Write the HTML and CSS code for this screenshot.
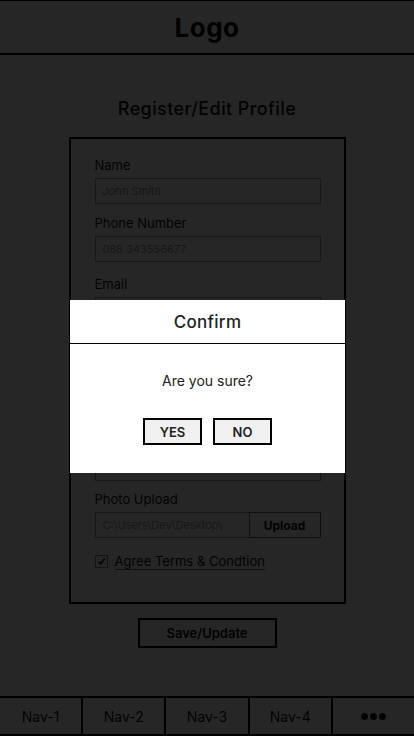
FILE: index.html
```
<!DOCTYPE html>
<html>
<head>
    <title>Register/Edit Profile</title>
    <link rel="stylesheet" href="styles.css">
</head>
<body>
    <div class="page">
        <header class="top-bar">
            <div class="logo">Logo</div>
        </header>

        <h1 class="page-title">Register/Edit Profile</h1>

        <form class="profile-card">
            <div class="field">
                <label>Name</label>
                <input type="text" placeholder="John Smith">
            </div>
            <div class="field">
                <label>Phone Number</label>
                <input type="text" placeholder="088 343556677">
            </div>
            <div class="field field-email">
                <label>Email</label>
                <input type="text" placeholder="john.smith@mail.com">
            </div>
            <div class="field">
                <label>Address</label>
                <textarea class="address-box" placeholder="Street, City"></textarea>
            </div>
            <div class="field field-photo">
                <label>Photo Upload</label>
                <div class="upload-row">
                    <input type="text" placeholder="C:\Users\Dev\Desktop\">
                    <button type="button" class="upload-btn">Upload</button>
                </div>
            </div>
            <div class="agree-row">
                <span class="check-box">
                    <svg width="9" height="9" viewBox="0 0 9 9"><path d="M1.5 4.8 L3.6 7 L7.6 1.5" fill="none" stroke="#000" stroke-width="1.4"/></svg>
                </span>
                <span class="agree-text">Agree Terms &amp; Condtion</span>
            </div>
        </form>

        <div class="save-wrap">
            <button type="button" class="save-btn">Save/Update</button>
        </div>

        <nav class="bottom-nav">
            <div class="nav-item">Nav-1</div>
            <div class="nav-item">Nav-2</div>
            <div class="nav-item">Nav-3</div>
            <div class="nav-item">Nav-4</div>
            <div class="nav-item nav-more"><span></span><span></span><span></span></div>
        </nav>
    </div>

    <div class="overlay"></div>

    <div class="modal">
        <div class="modal-head">Confirm</div>
        <div class="modal-body">
            <p class="modal-text">Are you sure?</p>
            <div class="modal-actions">
                <button type="button" class="modal-btn">YES</button>
                <button type="button" class="modal-btn">NO</button>
            </div>
        </div>
    </div>
</body>
</html>
```

FILE: styles.css
```
* {
    box-sizing: border-box;
}

body {
    margin: 0;
    background: #fff;
    font-family: Inter, "Noto Sans", sans-serif;
    color: #222;
}

.page {
    height: 736px;
    display: flex;
    flex-direction: column;
}

.page > * {
    flex-shrink: 0;
}

.top-bar {
    height: 55px;
    border-top: 1px solid #000;
    border-bottom: 2px solid #000;
    display: flex;
    align-items: center;
    justify-content: center;
}

.logo {
    font-size: 26px;
    font-weight: 700;
    color: #000;
    letter-spacing: 0.5px;
}

.page-title {
    margin: 42px 0 16px;
    text-align: center;
    font-size: 18px;
    line-height: 24px;
    font-weight: 500;
    color: #111;
    letter-spacing: 0.4px;
}

.profile-card {
    width: 277px;
    margin: 0 auto;
    border: 2px solid #000;
    padding: 18px 23px 32px 24px;
}

/* spacing only on top, so nothing collapses */
.field + .field {
    margin-top: 11px;
}

.field + .field-email {
    margin-top: 14px;
}

.field + .field-photo {
    margin-top: 10px;
}

.field label {
    display: block;
    font-size: 13px;
    line-height: 16px;
    margin-bottom: 5px;
    color: #111;
}

.field input,
.address-box {
    display: block;
    width: 100%;
    height: 26px;
    border: 1px solid #999;
    padding: 0 7px;
    font-family: inherit;
    font-size: 11px;
    color: #555;
    background: #fff;
}

.address-box {
    height: 126px;
    resize: none;
    padding-top: 6px;
}

.field input::placeholder,
.address-box::placeholder {
    color: #999;
}

.upload-row {
    display: flex;
}

.upload-row input {
    flex: 1;
    border-right: none;
}

.upload-btn {
    width: 72px;
    height: 26px;
    border: 1px solid #666;
    background: #fff;
    font-family: inherit;
    font-size: 12px;
    font-weight: 700;
    color: #111;
}

.agree-row {
    display: flex;
    align-items: center;
    gap: 7px;
    margin-top: 15px;
}

.check-box {
    width: 13px;
    height: 13px;
    border: 1px solid #888;
    display: flex;
    align-items: center;
    justify-content: center;
}

.agree-text {
    font-size: 13px;
    line-height: 16px;
    color: #111;
    border-bottom: 1px solid #666;
}

.save-wrap {
    display: flex;
    justify-content: center;
    margin-top: 14px;
}

.save-btn {
    width: 139px;
    height: 30px;
    border: 2px solid #000;
    background: #fff;
    font-family: inherit;
    font-size: 13px;
    font-weight: 600;
    color: #111;
}

.bottom-nav {
    margin-top: auto;
    height: 40px;
    border-top: 2px solid #000;
    border-bottom: 2px solid #000;
    display: flex;
}

.nav-item {
    flex: 1;
    display: flex;
    align-items: center;
    justify-content: center;
    font-size: 14px;
    color: #111;
}

.nav-item + .nav-item {
    border-left: 2px solid #000;
}

.nav-more {
    gap: 2px;
}

.nav-more span {
    width: 7px;
    height: 7px;
    border-radius: 50%;
    background: #111;
}

.overlay {
    position: fixed;
    inset: 0;
    background: rgba(0, 0, 0, 0.85);
}

.modal {
    position: fixed;
    top: 300px;
    left: 70px;
    width: 275px;
    height: 173px;
    background: #fff;
}

.modal-head {
    height: 44px;
    border-bottom: 1px solid #000;
    display: flex;
    align-items: center;
    justify-content: center;
    font-size: 17px;
    font-weight: 500;
    color: #222;
    letter-spacing: 0.3px;
}

.modal-body {
    padding-top: 28px;
    text-align: center;
}

.modal-text {
    margin: 0;
    font-size: 14px;
    line-height: 18px;
    color: #222;
}

.modal-actions {
    display: flex;
    justify-content: center;
    gap: 11px;
    margin-top: 28px;
}

.modal-btn {
    width: 59px;
    height: 27px;
    border: 2px solid #000;
    background: #f0f0f0;
    font-family: inherit;
    font-size: 13px;
    font-weight: 600;
    color: #222;
}
```
